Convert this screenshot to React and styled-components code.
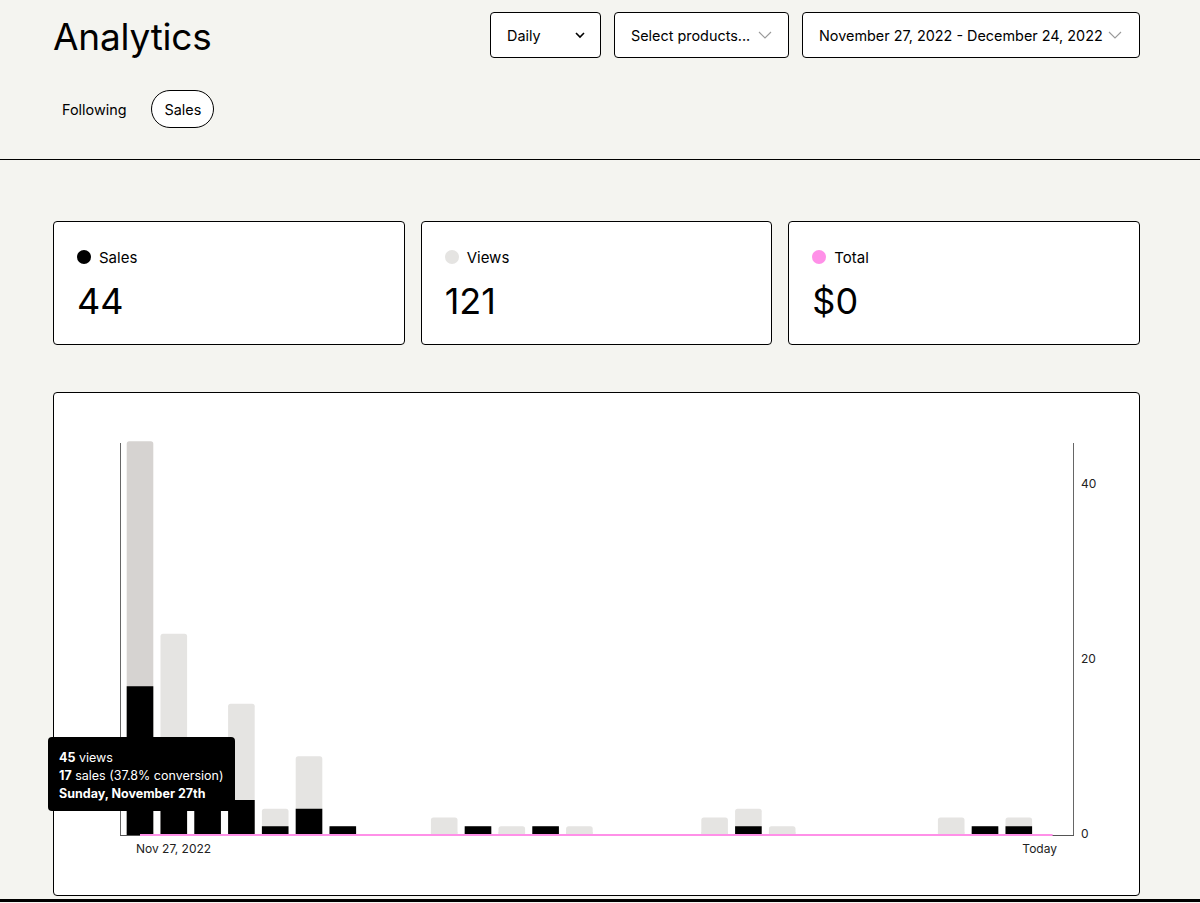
import React from "react";
import styled, { createGlobalStyle } from "styled-components";

const GlobalStyle = createGlobalStyle`
  * { box-sizing: border-box; }
  html, body { margin: 0; padding: 0; background: #f4f4f0; }
  body {
    font-family: Inter, "Noto Sans", "DejaVu Sans", sans-serif;
    color: #000;
    -webkit-font-smoothing: antialiased;
  }
`;

const Page = styled.div`
  width: 1200px;
  min-height: 903px;
  background: #f4f4f0;
  overflow: hidden;
`;

const Header = styled.header`
  padding: 12px 60px 31px 53px;
  border-bottom: 1px solid #000;
`;

const TopRow = styled.div`
  display: flex;
  align-items: center;
  justify-content: space-between;
  height: 46px;
`;

const Title = styled.h1`
  margin: 4px 0 0 0;
  font-size: 37px;
  font-weight: 400;
  line-height: 46px;
  letter-spacing: -0.2px;
`;

const Controls = styled.div`
  display: flex;
  gap: 13px;
`;

const Dropdown = styled.div`
  display: flex;
  align-items: center;
  justify-content: space-between;
  height: 46px;
  width: ${(p) => p.$w}px;
  padding: 0 ${(p) => p.$pr}px 0 16px;
  background: #fff;
  border: 1px solid #000;
  border-radius: 4px;
  font-size: 14.4px;
  white-space: nowrap;
`;

const Tabs = styled.nav`
  display: flex;
  align-items: center;
  gap: 16px;
  margin-top: 32px;
`;

const Tab = styled.div`
  display: flex;
  align-items: center;
  height: 38px;
  padding: 0 ${(p) => (p.$active ? 12 : 8)}px;
  font-size: 14.4px;
  border-radius: 19px;
  border: 1px solid ${(p) => (p.$active ? "#000" : "transparent")};
  background: ${(p) => (p.$active ? "#fff" : "transparent")};
`;

const Main = styled.main`
  padding: 61px 60px 0 53px;
`;

const Stats = styled.div`
  display: grid;
  grid-template-columns: repeat(3, 1fr);
  gap: 16px;
`;

const StatCard = styled.div`
  height: 124px;
  background: #fff;
  border: 1px solid #000;
  border-radius: 4px;
  padding: 24px 23px;
`;

const StatLabel = styled.div`
  display: flex;
  align-items: center;
  gap: 8px;
  height: 22px;
  font-size: 15px;
`;

const Dot = styled.span`
  width: 14px;
  height: 14px;
  border-radius: 50%;
  background: ${(p) => p.$c};
`;

const StatValue = styled.div`
  margin-top: 11px;
  font-size: 36px;
  line-height: 44px;
`;

const ChartCard = styled.div`
  position: relative;
  margin-top: 47px;
  height: 504px;
  background: #fff;
  border: 1px solid #000;
  border-radius: 4px;
`;

const ChartSvg = styled.svg`
  display: block;
`;

const Tooltip = styled.div`
  position: absolute;
  left: -6px;
  top: 344px;
  width: 187px;
  padding: 12px 11px 8px;
  background: #000;
  color: #fff;
  border-radius: 4px;
  font-size: 12.5px;
  line-height: 18px;
  white-space: nowrap;
  b { font-weight: 700; }
`;

const BottomRule = styled.div`
  margin-top: 3px;
  border-top: 3px solid #000;
`;

const ChevronSmall = () => (
  <svg width="12" height="8" viewBox="0 0 12 8" fill="none">
    <path d="M2 2l4 4 4-4" stroke="#000" strokeWidth="1.6" />
  </svg>
);

const ChevronThin = () => (
  <svg width="14" height="8" viewBox="0 0 14 8" fill="none">
    <path d="M1 1l6 6 6-6" stroke="#9a9a9a" strokeWidth="1.1" />
  </svg>
);

const data = [
  [45, 17], [23, 7], [8, 6], [15, 4], [3, 1], [9, 3], [1, 1],
  [0, 0], [0, 0], [2, 0], [1, 1], [1, 0], [1, 1], [1, 0],
  [0, 0], [0, 0], [0, 0], [2, 0], [3, 1], [1, 0], [0, 0],
  [0, 0], [0, 0], [0, 0], [2, 0], [1, 1], [2, 1], [0, 0],
];

const B = 442;
const T = 50;
const k = 8.75;
const step = 33.8;
const x0 = 72.7;
const bw = 26.6;

function Chart() {
  return (
    <ChartSvg width="1085" height="502" viewBox="0 0 1085 502">
      {data.map(([v, s], i) => {
        const x = x0 + step * i;
        const vh = v * k;
        const sh = s * k;
        const fill = i === 0 ? "#d6d3d1" : "#e5e4e2";
        return (
          <g key={i}>
            {v > 0 && <rect x={x} y={B - vh} width={bw} height={vh} rx="2.5" ry="2.5" fill={fill} />}
            {v > 0 && <rect x={x} y={B - Math.min(vh, 3)} width={bw} height={Math.min(vh, 3)} fill={fill} />}
            {s > 0 && <rect x={x} y={B - sh} width={bw} height={sh} fill="#000" />}
          </g>
        );
      })}
      <line x1="66.5" y1={T} x2="66.5" y2={B + 0.5} stroke="#666" strokeWidth="1" />
      <line x1="1019.5" y1={T} x2="1019.5" y2={B + 0.5} stroke="#666" strokeWidth="1" />
      <line x1="66" y1={B + 0.5} x2="1020" y2={B + 0.5} stroke="#555" strokeWidth="1" />
      <line x1={x0 + bw / 2} y1={B} x2={x0 + step * 27 + bw / 2} y2={B} stroke="#ff90e8" strokeWidth="2" />
      <g fontSize="12" fill="#222" fontFamily="Inter, sans-serif">
        <text x="1027" y={B - 40 * k} dominantBaseline="middle">40</text>
        <text x="1027" y={B - 20 * k} dominantBaseline="middle">20</text>
        <text x="1027" y={B} dominantBaseline="middle">0</text>
        <text x="82" y={B + 15} dominantBaseline="middle">Nov 27, 2022</text>
        <text x="1003" y={B + 15} dominantBaseline="middle" textAnchor="end">Today</text>
      </g>
    </ChartSvg>
  );
}

export default function App() {
  return (
    <Page>
      <GlobalStyle />
      <Header>
        <TopRow>
          <Title>Analytics</Title>
          <Controls>
            <Dropdown $w={111} $pr={14}>
              Daily
              <ChevronSmall />
            </Dropdown>
            <Dropdown $w={175} $pr={16}>
              Select products...
              <ChevronThin />
            </Dropdown>
            <Dropdown $w={338} $pr={17}>
              November 27, 2022 - December 24, 2022
              <ChevronThin />
            </Dropdown>
          </Controls>
        </TopRow>
        <Tabs>
          <Tab>Following</Tab>
          <Tab $active>Sales</Tab>
        </Tabs>
      </Header>
      <Main>
        <Stats>
          <StatCard>
            <StatLabel><Dot $c="#000" />Sales</StatLabel>
            <StatValue>44</StatValue>
          </StatCard>
          <StatCard>
            <StatLabel><Dot $c="#e5e4e2" />Views</StatLabel>
            <StatValue>121</StatValue>
          </StatCard>
          <StatCard>
            <StatLabel><Dot $c="#ff90e8" />Total</StatLabel>
            <StatValue>$0</StatValue>
          </StatCard>
        </Stats>
        <ChartCard>
          <Chart />
          <Tooltip>
            <div><b>45</b> views</div>
            <div><b>17</b> sales (37.8% conversion)</div>
            <div><b>Sunday, November 27th</b></div>
          </Tooltip>
        </ChartCard>
      </Main>
      <BottomRule />
    </Page>
  );
}
